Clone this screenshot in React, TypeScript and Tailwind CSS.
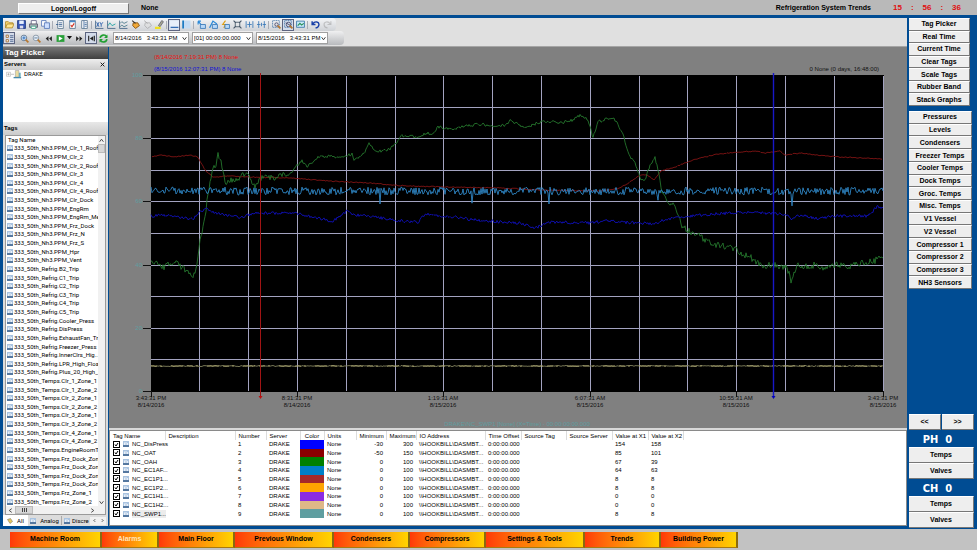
import type { ReactNode } from "react";

const UI = "font-['Liberation_Sans',Arial,sans-serif]";
const LIST = "font-[Roboto,'Liberation_Sans',sans-serif]";

type Point = [number, number];

const SERVER = "DRAKE";

const tagNames = [
  "333_50th_Nh3.PPM_Clr_1_Roof",
  "333_50th_Nh3.PPM_Clr_2",
  "333_50th_Nh3.PPM_Clr_2_Roof",
  "333_50th_Nh3.PPM_Clr_3",
  "333_50th_Nh3.PPM_Clr_4",
  "333_50th_Nh3.PPM_Clr_4_Roof",
  "333_50th_Nh3.PPM_Clr_Dock",
  "333_50th_Nh3.PPM_EngRm",
  "333_50th_Nh3.PPM_EngRm_Me",
  "333_50th_Nh3.PPM_Frz_Dock",
  "333_50th_Nh3.PPM_Frz_N",
  "333_50th_Nh3.PPM_Frz_S",
  "333_50th_Nh3.PPM_Hpr",
  "333_50th_Nh3.PPM_Vent",
  "333_50th_Refrig.B2_Trip",
  "333_50th_Refrig.C1_Trip",
  "333_50th_Refrig.C2_Trip",
  "333_50th_Refrig.C3_Trip",
  "333_50th_Refrig.C4_Trip",
  "333_50th_Refrig.C5_Trip",
  "333_50th_Refrig.Cooler_Press",
  "333_50th_Refrig.DisPress",
  "333_50th_Refrig.ExhaustFan_Tr",
  "333_50th_Refrig.Freezer_Press",
  "333_50th_Refrig.InnerClrs_Hig..",
  "333_50th_Refrig.LPR_High_Floa",
  "333_50th_Refrig.Plus_20_High_.",
  "333_50th_Temps.Clr_1_Zone_1",
  "333_50th_Temps.Clr_1_Zone_2",
  "333_50th_Temps.Clr_2_Zone_1",
  "333_50th_Temps.Clr_2_Zone_2",
  "333_50th_Temps.Clr_3_Zone_1",
  "333_50th_Temps.Clr_3_Zone_2",
  "333_50th_Temps.Clr_4_Zone_1",
  "333_50th_Temps.Clr_4_Zone_2",
  "333_50th_Temps.EngineRoomT.",
  "333_50th_Temps.Frz_Dock_Zon.",
  "333_50th_Temps.Frz_Dock_Zon.",
  "333_50th_Temps.Frz_Dock_Zon.",
  "333_50th_Temps.Frz_Dock_Zon.",
  "333_50th_Temps.Frz_Zone_1",
  "333_50th_Temps.Frz_Zone_2",
];

const pens = [
  { name: "NC_DisPress", color: "bg-[#0000ff]", min: -30, max: 300, x1: 154, x2: 158 },
  { name: "NC_OAT", color: "bg-[#8b0000]", min: -50, max: 150, x1: 85, x2: 101 },
  { name: "NC_OAH", color: "bg-[#008000]", min: 0, max: 100, x1: 67, x2: 39 },
  { name: "NC_EC1AF...", color: "bg-[#0080c8]", min: 0, max: 100, x1: 64, x2: 63 },
  { name: "NC_EC1P1...", color: "bg-[#a52a2a]", min: 0, max: 100, x1: 8, x2: 8 },
  { name: "NC_EC1P2...", color: "bg-[#ffa500]", min: 0, max: 100, x1: 8, x2: 8 },
  { name: "NC_EC1H1...", color: "bg-[#8a2be2]", min: 0, max: 100, x1: 0, x2: 0 },
  { name: "NC_EC1H2...", color: "bg-[#deb887]", min: 0, max: 100, x1: 0, x2: 0 },
  { name: "NC_SWP1...", color: "bg-[#5f9ea0]", min: 0, max: 100, x1: 8, x2: 8 },
];

const penColumns = [
  { label: "Tag Name", width: "w-[55px]", align: "text-left" },
  { label: "Description", width: "w-[70px]", align: "text-left" },
  { label: "Number", width: "w-[31px]", align: "text-left" },
  { label: "Server", width: "w-[34px]", align: "text-left" },
  { label: "Color", width: "w-[24px]", align: "text-center" },
  { label: "Units", width: "w-[32px]", align: "text-left" },
  { label: "Minimum", width: "w-[30px]", align: "text-right" },
  { label: "Maximum", width: "w-[30px]", align: "text-right" },
  { label: "IO Address", width: "w-[69px]", align: "text-left" },
  { label: "Time Offset", width: "w-[36px]", align: "text-right" },
  { label: "Source Tag", width: "w-[45px]", align: "text-left" },
  { label: "Source Server", width: "w-[46px]", align: "text-left" },
  { label: "Value at X1", width: "w-[36px]", align: "text-left" },
  { label: "Value at X2", width: "w-[35px]", align: "text-left" },
];

const viewButtons = ["Tag Picker", "Real Time", "Current Time", "Clear Tags", "Scale Tags", "Rubber Band", "Stack Graphs"];

const groupButtons = [
  "Pressures",
  "Levels",
  "Condensers",
  "Freezer Temps",
  "Cooler Temps",
  "Dock Temps",
  "Groc. Temps",
  "Misc. Temps",
  "V1 Vessel",
  "V2 Vessel",
  "Compressor 1",
  "Compressor 2",
  "Compressor 3",
  "NH3 Sensors",
];

const navButtons = [
  { label: "Machine Room", width: "w-[92px]" },
  { label: "Alarms", width: "w-[57px]", active: true },
  { label: "Main Floor", width: "w-[76px]" },
  { label: "Previous Window", width: "w-[99px]" },
  { label: "Condensers", width: "w-[76px]" },
  { label: "Compressors", width: "w-[76px]" },
  { label: "Settings & Tools", width: "w-[99px]" },
  { label: "Trends", width: "w-[76px]" },
  { label: "Building Power", width: "w-[77px]" },
];

/* ---------- Trend data ---------- */

const humidity: Point[] = [
  [151, 264], [160, 264], [164, 268], [167, 264], [176, 263], [184, 269], [188, 271], [193, 277], [197, 264],
  [199, 250], [201, 235], [205, 218], [208, 193], [213, 166], [216, 167], [218, 155], [221, 160], [225, 184],
  [232, 180], [240, 177], [247, 173], [255, 188], [260, 178], [268, 175], [274, 180], [284, 172], [288, 176],
  [297, 165], [302, 161], [307, 166], [318, 157], [345, 156], [352, 154], [354, 159], [362, 156], [369, 144],
  [376, 152], [390, 149], [402, 136], [410, 136], [415, 137], [427, 133], [432, 135], [438, 127], [452, 130],
  [465, 126], [480, 124], [495, 126], [505, 125], [510, 121], [527, 128], [537, 123], [550, 121], [560, 123],
  [572, 120], [580, 115], [588, 120], [593, 137], [598, 122], [608, 118], [614, 118], [622, 132], [630, 157],
  [634, 160], [641, 180], [645, 180], [649, 168], [655, 158], [658, 170], [662, 192], [670, 206], [673, 202],
  [682, 225], [687, 230], [697, 235], [712, 243], [737, 250], [755, 260], [763, 269], [770, 265], [787, 267],
  [791, 280], [797, 265], [810, 266], [818, 264], [820, 271], [826, 266], [843, 264], [847, 271], [853, 265],
  [870, 262], [883, 258],
];

const outsideTemp: Point[] = [
  [152, 157], [160, 155], [175, 157], [190, 155], [198, 157], [205, 170], [213, 177], [230, 176], [250, 177],
  [290, 178], [330, 181], [370, 183], [405, 186], [450, 187], [500, 188], [540, 190], [600, 191], [620, 188],
  [630, 182], [640, 175], [647, 175], [654, 180], [661, 171], [675, 167], [690, 161], [700, 158], [718, 154],
  [740, 152], [756, 151], [765, 153], [780, 151], [785, 155], [800, 153], [815, 155], [840, 157], [882, 159],
];

const pressure: Point[] = [
  [151, 216], [165, 215], [185, 218], [193, 219], [200, 212], [206, 209], [212, 212], [220, 214], [240, 217],
  [255, 213], [295, 213], [310, 217], [333, 221], [347, 211], [355, 215], [375, 217], [400, 221], [418, 222],
  [425, 214], [435, 216], [455, 217], [475, 220], [500, 222], [520, 223], [535, 228], [550, 222], [590, 223],
  [603, 221], [655, 224], [665, 219], [700, 215], [745, 212], [785, 214], [792, 219], [800, 215], [820, 219],
  [830, 216], [868, 216], [877, 207], [883, 208],
];

const airflow: Point[] = [
  [151, 191], [379, 191], [380, 202], [381, 191], [471, 191], [472, 204], [473, 191], [548, 191], [549, 201],
  [550, 191], [657, 191], [658, 203], [659, 191], [791, 191], [792, 205], [793, 191], [883, 191],
];

const suction: Point[] = [[151, 366], [883, 366]];

function trace(points: Point[], noise: (x: number) => number, seed: number) {
  let state = seed;
  const rand = () => {
    state = (state * 16807) % 2147483647;
    return state / 2147483647 - 0.5;
  };
  const out: string[] = [];
  for (let i = 0; i < points.length - 1; i++) {
    const [x0, y0] = points[i];
    const [x1, y1] = points[i + 1];
    for (let x = x0; x < x1; x++) {
      const y = y0 + ((y1 - y0) * (x - x0)) / (x1 - x0);
      out.push(`${x},${(y + rand() * noise(x)).toFixed(1)}`);
    }
  }
  const [lx, ly] = points[points.length - 1];
  out.push(`${lx},${ly}`);
  return out.join(" ");
}

const traces = [
  { color: "#801414", points: trace(outsideTemp, () => 1, 11) },
  { color: "#25752c", points: trace(humidity, (x) => (x > 680 ? 7 : x > 290 ? 3 : 6), 23) },
  { color: "#1010b8", points: trace(pressure, () => 3, 37) },
  { color: "#2f86c4", points: trace(airflow, () => 8, 51) },
  { color: "#85855f", points: trace(suction, () => 1, 73) },
];

const timeLabels = [
  { x: 151, time: "3:43:31 PM", date: "8/14/2016" },
  { x: 297, time: "8:31:31 PM", date: "8/14/2016" },
  { x: 443, time: "1:19:31 AM", date: "8/15/2016" },
  { x: 590, time: "6:07:31 AM", date: "8/15/2016" },
  { x: 736, time: "10:55:31 AM", date: "8/15/2016" },
  { x: 883, time: "3:43:31 PM", date: "8/15/2016" },
];

const gridX = Array.from({ length: 14 }, (_, i) => Math.floor(151 + (i + 1) * 48.8));
const gridY = Array.from({ length: 9 }, (_, i) => Math.round(75 + (i + 1) * 31.6));

function TrendChart() {
  return (
    <svg viewBox="109 47 798 381" className="block w-full" role="img" aria-label="Trend">
      <rect x="109" y="47" width="798" height="381" fill="#808080" />
      <rect x="151" y="75" width="733" height="317" fill="#000" />
      <g stroke="#a3a3c0" shapeRendering="crispEdges">
        {gridX.map((x) => (
          <path key={x} d={`M${x}.5 76V391`} />
        ))}
        {gridY.map((y) => (
          <path key={y} d={`M151 ${y}.5H884`} />
        ))}
        <path d="M883.5 76V391" />
      </g>
      <g stroke="#111" shapeRendering="crispEdges">
        {[75, 138, 201, 265, 328, 391].map((y) => (
          <path key={y} d={`M143 ${y}.5H151`} />
        ))}
        {timeLabels.map((t) => (
          <path key={t.x} d={`M${t.x}.5 391V397`} />
        ))}
      </g>
      {traces.map((t) => (
        <polyline key={t.color} points={t.points} fill="none" stroke={t.color} strokeWidth="0.9" />
      ))}
      <path d="M151 366H883" stroke="#e0d890" strokeWidth="0.6" strokeDasharray="6 3 2 9 12 4" />
      <path d="M260.5 73V396" stroke="#a01414" />
      <path d="M258.5 396h4l-2 3z" fill="#c01010" />
      <path d="M773.5 73V396" stroke="#1818c8" strokeWidth="1.4" />
      <path d="M771.5 396h4l-2 3z" fill="#0000c0" />
      <g fontSize="6">
        <text x="154" y="59" fill="#f01010">(8/14/2016 7:19:31 PM) 8 None</text>
        <text x="154" y="71" fill="#1010d8">(8/15/2016 12:07:31 PM) 8 None</text>
        <text x="879" y="71" textAnchor="end" fill="#111">0 None (0 days, 16:48:00)</text>
        <g fill="#5f9ea0" textAnchor="end">
          {[100, 80, 60, 40, 20, 0].map((v, i) => (
            <text key={v} x="142" y={77 + Math.round(i * 63.2)}>{v}</text>
          ))}
        </g>
        <g fill="#111" textAnchor="middle">
          {timeLabels.map((t) => (
            <g key={t.x}>
              <text x={t.x} y="400">{t.time}</text>
              <text x={t.x} y="407">{t.date}</text>
            </g>
          ))}
        </g>
        <text x="517" y="426" textAnchor="middle" fill="#5f9ea0">DRAKE\NC_SWP1 [None] (X=Time) - 00:00:00:00.000</text>
      </g>
    </svg>
  );
}

/* ---------- Toolbar ---------- */

function Icon({ children, dim }: { children: ReactNode; dim?: boolean }) {
  return (
    <svg viewBox="0 0 16 16" className={dim ? "size-[9px] opacity-40" : "size-[9px]"} fill="none" strokeWidth="1.5">
      {children}
    </svg>
  );
}

const sheet = <path d="M3 1h10v14H3z" fill="#fff" stroke="#5a7590" />;
const plot = <path d="M1 1v14h14" stroke="#446688" />;
const lens = <path d="M10 10l5 5" stroke="#b87830" strokeWidth="3" />;

const fileIcons: [string, ReactNode][] = [
  ["Open", <><path d="M1 14V3h5l2 2h6v3" fill="#f8d878" stroke="#b08828" /><path d="M1 14l3-7h12l-3 7z" fill="#ffe690" stroke="#b08828" /></>],
  ["Save", <><path d="M1 1h14v14H1z" fill="#3858b8" stroke="#203880" /><path d="M4 1h8v6H4z" fill="#e8f0ff" /><path d="M5 10h6v5H5z" fill="#dde" /></>],
  ["Print", <><path d="M4 7V1h9v6" fill="#fff" stroke="#668" /><path d="M1 7h14v6H1z" fill="#a8b0b8" stroke="#556" /><path d="M4 11h8v4H4z" fill="#fff" stroke="#4a8" /></>],
  ["Copy", <><path d="M1 1h8v10H1z" fill="#fff" stroke="#5878b8" /><path d="M6 5h9v10H6z" fill="#cfe0ff" stroke="#5878b8" /></>],
];

const docIcons: [string, ReactNode][] = [
  ["Export", <>{sheet}<path d="M5 5h6M5 8h6M5 11h6M0 8h4" stroke="#3a6090" /></>],
  ["Configure", <>{sheet}<path d="M3 1h10v3H3z" fill="#4888c8" /><path d="M5 9l2 3 4-6" stroke="#d03020" strokeWidth="2" /></>],
  ["Report", <>{sheet}<path d="M7 1v14M8 5h4M8 8h4M8 11h4" stroke="#4870a0" /></>],
];

const chartIcons: [string, ReactNode][] = [
  ["XY Plot", <>{plot}<path d="M3 4l4 8M7 4l-4 8M9 4l2 4 3-4M11 8v4" stroke="#2058a8" /></>],
  ["Trend Plot", <>{plot}<path d="M2 10l3-5 4 5 6-3" stroke="#18a0a0" /></>],
  ["Stacked Plot", <>{plot}<path d="M2 6l3-3 4 3 6-3M2 12l3-3 4 3 6-3" stroke="#48788a" /></>],
  ["Add Tag", <><path d="M4 5h8l3 5-7 5-5-5z" fill="#f0a838" stroke="#805010" /><path d="M2 1l6 5" stroke="#333" strokeWidth="2" /></>],
  ["Remove Tag", <g opacity=".45"><path d="M4 5h8l3 5-7 5-5-5z" fill="#ddd" stroke="#777" /><path d="M2 1l6 5" stroke="#555" /></g>],
  ["Highlight", <><path d="M6 10l6-9 3 2-6 9z" fill="#a8a890" stroke="#667" /><path d="M0 12h10v4H0z" fill="#f0e020" /></>],
];

const cursorIcons: [string, ReactNode][] = [
  ["Pan X", <><path d="M2 2l6 7M2 2v6M2 2h5" stroke="#2888d8" strokeWidth="2" /><path d="M6 8h9v7H6z" fill="#b8d8f8" stroke="#3878b8" /></>],
  ["Pan Y", <><path d="M1 14l6-12 7 5" stroke="#2888d8" strokeWidth="2" /><path d="M6 8h9v7H6z" fill="#b8d8f8" stroke="#3878b8" /></>],
  ["Auto Scale", <><path d="M8 1l-5 7h5l-3 6" stroke="#e0a010" strokeWidth="2" /><path d="M7 8h8v7H7z" fill="#b8d8f8" stroke="#3878b8" /></>],
  ["Zoom Extents", <><path d="M4 4h8v8H4z" stroke="#456" /><path d="M1 1l4 4M15 1l-4 4M1 15l4-4M15 15l-4-4" stroke="#456" strokeWidth="2" /></>],
  ["Fit Width", <><path d="M2 2v12M14 2v12M4 8h8M8 3v10" stroke="#3878b8" /></>],
  ["Center", <><path d="M3 2v12M13 2v12M0 8h6M10 8h6M8 5v6" stroke="#3878b8" /></>],
];

const zoomIcons: [string, ReactNode, boolean][] = [
  ["Zoom Box", <><path d="M1 1h12v12H1z" stroke="#4878a8" strokeDasharray="2 1" /><circle cx="8" cy="8" r="3" stroke="#446" />{lens}</>, false],
  ["Zoom Trace", <><path d="M1 1h12v12H1z" stroke="#4878a8" strokeDasharray="2 1" /><path d="M3 5l9 5" stroke="#446" /><circle cx="8" cy="8" r="4" stroke="#446" />{lens}</>, true],
  ["Snapshot", <><path d="M1 2h14v11H1z" fill="#c8e8f8" stroke="#3878a8" /><path d="M3 10l4-4 3 3 4-3" stroke="#289058" strokeWidth="2" /></>, false],
];

function ToolButton({ label, children, selected, dim }: { label: string; children: ReactNode; selected?: boolean; dim?: boolean }) {
  return (
    <button
      aria-label={label}
      className={
        selected
          ? "flex size-3 shrink-0 items-center justify-center border border-[#5c6480] bg-[#d3dbea]"
          : "flex size-3 shrink-0 items-center justify-center"
      }
    >
      <Icon dim={dim}>{children}</Icon>
    </button>
  );
}

function Separator() {
  return <span className="mx-px h-2 w-px shrink-0 bg-[#a9adb5]" />;
}

function ToolSelect({ label, value, width }: { label: string; value: string; width: string }) {
  return (
    <span className={`relative flex h-3 items-center border border-[#a0a0a0] bg-white ${width}`}>
      <select aria-label={label} className="w-full appearance-none bg-transparent pl-px text-[6px] leading-[10px] text-black">
        <option>{value}</option>
      </select>
      <svg viewBox="0 0 8 8" className="pointer-events-none absolute right-px size-[5px]" fill="none" stroke="#333" strokeWidth="1.5">
        <path d="M1 2l3 4 3-4" />
      </svg>
    </span>
  );
}

function Toolbars() {
  return (
    <div className="border-b border-[#a5a5a5] bg-[#e0e0e0] pb-px">
      <div className="flex h-[13px] w-[333px] items-center rounded-r-sm bg-gradient-to-b from-[#f4f5f7] to-[#cfd2d6]">
        {fileIcons.map(([label, icon]) => <ToolButton key={label} label={label}>{icon}</ToolButton>)}
        <Separator />
        {docIcons.map(([label, icon]) => <ToolButton key={label} label={label}>{icon}</ToolButton>)}
        <Separator />
        {chartIcons.map(([label, icon]) => <ToolButton key={label} label={label}>{icon}</ToolButton>)}
        <Separator />
        <ToolButton label="Show Pen Table" selected>
          <path d="M0 1h16v14H0z" fill="#e6eefa" /><path d="M1 13h14" stroke="#1858a8" strokeWidth="2" />
        </ToolButton>
        <ToolButton label="Show Tag Picker">
          <path d="M1 1h14v14H1z" fill="#c4dcf4" /><path d="M2 1v14" stroke="#1878c0" strokeWidth="3" />
        </ToolButton>
        <Separator />
        {cursorIcons.map(([label, icon]) => <ToolButton key={label} label={label}>{icon}</ToolButton>)}
        <Separator />
        {zoomIcons.map(([label, icon, on]) => <ToolButton key={label} label={label} selected={on}>{icon}</ToolButton>)}
        <Separator />
        <ToolButton label="Undo"><path d="M3 7c4-6 12-4 11 2-1 4-4 5-6 5M2 2v6h6" stroke="#1840a8" strokeWidth="2.5" /></ToolButton>
        <ToolButton label="Redo" dim><path d="M13 7C9 1 1 3 2 9c1 4 4 5 6 5M14 2v6H8" stroke="#888" strokeWidth="2" /></ToolButton>
      </div>
      <div className="flex h-3.5 w-[341px] items-center rounded-r-sm bg-gradient-to-b from-[#f0f0f1] to-[#b8babd]">
        <ToolButton label="Tag Tree" selected>
          <path d="M2 2h4v4H2zM2 10h4v4H2z" fill="#fff" stroke="#a06828" /><path d="M9 3h6M9 6h6M9 10h6M9 13h6" stroke="#48608a" />
        </ToolButton>
        <span className="w-[3px]" />
        <ToolButton label="Zoom In"><circle cx="7" cy="7" r="5" fill="#d8ecff" stroke="#58708a" /><path d="M4 7h6M7 4v6" stroke="#2060b0" />{lens}</ToolButton>
        <ToolButton label="Zoom Out"><circle cx="7" cy="7" r="5" fill="#e8f0f8" stroke="#8090a0" /><path d="M4 7h6" stroke="#507090" />{lens}</ToolButton>
        <ToolButton label="Rewind"><path d="M8 4v9L3 8zM14 4v9L9 8z" fill="#222" /></ToolButton>
        <ToolButton label="Play"><path d="M1 2h14v12H1z" fill="#28a038" /><path d="M5 4v8l7-4z" fill="#fff" /></ToolButton>
        <button aria-label="Play Options" className="flex w-1.5 justify-center">
          <svg viewBox="0 0 8 5" className="w-[5px]" fill="#111"><path d="M0 0h8L4 5z" /></svg>
        </button>
        <span className="w-px" />
        <ToolButton label="Fast Forward"><path d="M2 4v9l5-5zM8 4v9l5-5z" fill="#222" /></ToolButton>
        <ToolButton label="Go To End" selected><path d="M3 3v10M13 3v10" stroke="#222" strokeWidth="2" /><path d="M11 4v8L5 8z" fill="#222" /></ToolButton>
        <ToolButton label="Refresh">
          <path d="M2 7c1-6 9-7 12-2M14 9c-1 6-9 7-12 2" stroke="#20a030" strokeWidth="3" /><path d="M15 1v6H9zM1 15V9h6z" fill="#20a030" />
        </ToolButton>
        <span className="ml-1 flex gap-[3px]">
          <ToolSelect label="Start time" value={"8/14/2016\u00a0\u00a0\u00a03:43:31 PM"} width="w-[76px]" />
          <ToolSelect label="Span" value="[01] 00:00:00.000" width="w-[61px]" />
          <ToolSelect label="End time" value={"8/15/2016\u00a0\u00a0\u00a03:43:31 PM"} width="w-[72px]" />
        </span>
      </div>
    </div>
  );
}

/* ---------- Tag picker ---------- */

function TagIcon() {
  return (
    <svg viewBox="0 0 12 12" className="size-1.5 shrink-0">
      <path d="M0 0h12v12H0z" fill="#a9c3e0" />
      <path d="M0 8h12v4H0z" fill="#54779f" />
      <path d="M3 3v5M6 2v6M9 4v4" stroke="#fff" strokeWidth="1.5" />
    </svg>
  );
}

function Chevron({ d }: { d: string }) {
  return (
    <svg viewBox="0 0 8 8" className="size-[5px]" fill="none" stroke="#444" strokeWidth="1.5">
      <path d={d} />
    </svg>
  );
}

function TagPicker() {
  return (
    <aside className="flex w-[105px] shrink-0 flex-col bg-[#dcdcdc]">
      <h2 className="h-3 bg-gradient-to-b from-[#777] to-[#3f3f3f] pl-0.5 text-[8px] leading-3 font-bold text-white">Tag Picker</h2>
      <div className="flex h-[11px] items-center justify-between bg-gradient-to-b from-[#eee] to-[#ccc] px-px text-[6px] font-bold">
        <span>Servers</span>
        <button aria-label="Close" className="pr-0.5">
          <svg viewBox="0 0 8 8" className="size-[5px]" stroke="#111" strokeWidth="1.5"><path d="M1 1l6 6M7 1l-6 6" /></svg>
        </button>
      </div>
      <div className={`flex h-[52px] items-start gap-0.5 bg-white pl-[3px] text-[6px] leading-[8px] ${LIST}`}>
        <svg viewBox="0 0 36 20" className="h-[9px] w-4">
          <path d="M1 5h9v9H1z" fill="#fff" stroke="#999" />
          <path d="M3 9.5h5M5.5 7v5M11 9.5h7" stroke="#777" />
          <path d="M21 1h8v15h-8z" fill="#e8dca0" stroke="#889" />
          <path d="M17 17h17" stroke="#48a" strokeWidth="3" />
          <path d="M29 6h4v10h-4z" fill="#6ab0c0" />
        </svg>
        <span>{SERVER}</span>
      </div>
      <h3 className="h-[13px] bg-gradient-to-b from-[#e8e8e8] to-[#cbcbcb] pl-px text-[6px] leading-[12px] font-bold">Tags</h3>
      <div className="mx-0.5 flex flex-1 flex-col border border-[#9a9a9a] bg-white">
        <div className="flex flex-1">
          <div className={`flex w-[92px] flex-col pl-px text-[6px] leading-[8px] ${LIST}`}>
            <div className="h-2 pl-px">Tag Name</div>
            <ul className="grid flex-1 auto-rows-fr">
              {tagNames.map((name, i) => (
                <li key={i} className="flex items-center gap-px whitespace-nowrap">
                  <TagIcon />
                  {name}
                </li>
              ))}
            </ul>
          </div>
          <div className="flex flex-1 flex-col items-center justify-between bg-[#f1f1f1]">
            <div className="flex w-full flex-col items-center">
              <button aria-label="Scroll up" className="flex h-2 items-center"><Chevron d="M1 6l3-4 3 4" /></button>
              <span className="h-[9px] w-full border border-[#bbb] bg-[#d6d6d6]" />
            </div>
            <button aria-label="Scroll down" className="flex h-2 items-center"><Chevron d="M1 2l3 4 3-4" /></button>
          </div>
        </div>
        <div className="flex h-2 items-center bg-[#f1f1f1] pr-[10px] pl-0.5">
          <button aria-label="Scroll left"><Chevron d="M6 1L2 4l4 3" /></button>
          <span className="ml-0.5 flex h-2 w-[18px] items-center justify-center gap-px border border-[#bbb] bg-[#d6d6d6]">
            <i className="h-1 w-px bg-[#444]" />
            <i className="h-1 w-px bg-[#444]" />
            <i className="h-1 w-px bg-[#444]" />
          </span>
          <button aria-label="Scroll right" className="ml-auto"><Chevron d="M2 1l4 3-4 3" /></button>
        </div>
      </div>
      <div className={`flex h-[11px] items-center text-[6px] ${LIST}`}>
        <button className="flex h-full w-[25px] items-center justify-center gap-1 bg-white">
          <svg viewBox="0 0 12 12" className="size-1.5"><path d="M1 3l6-2 4 6-5 4z" fill="#e8c860" stroke="#665" /></svg>
          All
        </button>
        <button className="flex w-[34px] items-center justify-center gap-1 border-r border-[#aaa]"><TagIcon />Analog</button>
        <button className="flex w-[28px] items-center gap-0.5 pl-0.5"><TagIcon />Discre</button>
        <button aria-label="Previous tab" className="flex h-2 w-2 items-center justify-center bg-[#f1f1f1]"><Chevron d="M5 2L3 4l2 2" /></button>
        <button aria-label="Next tab" className="flex h-2 w-2 items-center justify-center bg-[#f1f1f1]"><Chevron d="M3 2l2 2-2 2" /></button>
      </div>
    </aside>
  );
}

/* ---------- Pen table ---------- */

function PenTable() {
  return (
    <div className="flex-1 border border-[#8a8a8a] bg-white text-[6px] leading-[8px]">
      <table className="h-[87px] w-full table-fixed border-collapse [&_td]:px-[3px] [&_td]:whitespace-nowrap">
        <thead>
          <tr className="h-[9px]">
            {penColumns.map((c) => (
              <th key={c.label} className={`border-r border-[#dcdcdc] px-[3px] font-normal whitespace-nowrap ${c.width} ${c.align}`}>
                {c.label}
              </th>
            ))}
            <td />
          </tr>
        </thead>
        <tbody>
          {pens.map((pen, i) => (
            <tr key={pen.name}>
              <td>
                <label className="flex items-center gap-[3px]">
                  <span className="relative flex size-[7px] shrink-0">
                    <input type="checkbox" defaultChecked className="size-[7px] appearance-none border border-black bg-white" />
                    <svg viewBox="0 0 7 7" className="pointer-events-none absolute inset-0" fill="none" stroke="#000">
                      <path d="M2 3.5l1 1.5 2-3" />
                    </svg>
                  </span>
                  <TagIcon />
                  <span className={i === pens.length - 1 ? "bg-[#ececec]" : ""}>{pen.name}</span>
                </label>
              </td>
              <td />
              <td>{i + 1}</td>
              <td>{SERVER}</td>
              <td className={pen.color} />
              <td>None</td>
              <td className="text-right">{pen.min}</td>
              <td className="text-right">{pen.max}</td>
              <td>\\HOOKBILL\DASMBT...</td>
              <td className="text-right">0:00:00.000</td>
              <td />
              <td />
              <td>{pen.x1}</td>
              <td>{pen.x2}</td>
              <td />
            </tr>
          ))}
        </tbody>
      </table>
    </div>
  );
}

/* ---------- Side rail ---------- */

function RailButton({ children }: { children: ReactNode }) {
  return (
    <button className="flex w-full flex-1 items-center justify-center border-t border-r border-b border-t-white border-r-[#777] border-b-[#777] bg-[#eee] text-[7px] leading-[8px] font-bold whitespace-nowrap">
      {children}
    </button>
  );
}

function RailGroup({ title }: { title: string }) {
  return (
    <section>
      <h2 className="h-[17px] pr-2 text-center font-['DejaVu_Sans_Condensed','DejaVu_Sans',sans-serif] text-[11px] leading-[19px] font-bold whitespace-pre text-white">
        {title}
      </h2>
      <div className="flex h-8 flex-col">
        <RailButton>Temps</RailButton>
        <RailButton>Valves</RailButton>
      </div>
    </section>
  );
}

function SideRail() {
  return (
    <nav className="flex w-[70px] shrink-0 flex-col pr-[3px] pl-0.5">
      <div className="mr-1 flex h-[88px] flex-col">
        {viewButtons.map((b) => <RailButton key={b}>{b}</RailButton>)}
      </div>
      <div className="mt-[5px] mr-0.5 flex h-[178px] flex-col">
        {groupButtons.map((b) => <RailButton key={b}>{b}</RailButton>)}
      </div>
      <div className="mt-auto flex flex-col">
        <div className="flex h-4 gap-px">
          <RailButton>&lt;&lt;</RailButton>
          <RailButton>&gt;&gt;</RailButton>
        </div>
        <RailGroup title="PH  0" />
        <RailGroup title="CH  0" />
      </div>
    </nav>
  );
}

export default function App() {
  return (
    <div className={`flex min-h-screen flex-col bg-[#004c93] text-black ${UI}`}>
      {/* Status bar */}
      <header className="flex h-[15px] items-center bg-[#b9b9b9] pt-px pr-4 pl-[18px] text-[7px] font-bold">
        <button className="h-[11px] w-[111px] border border-[#777] border-t-white border-l-white bg-[#eee] leading-[9px]">Logon/Logoff</button>
        <span className="ml-3">None</span>
        <h1 className="mr-[22px] ml-auto">Refrigeration System Trends</h1>
        <div className="flex w-[68px] justify-between text-[8px] text-[#e01010]">
          <span>15</span>
          <span>:</span>
          <span>56</span>
          <span>:</span>
          <span>36</span>
        </div>
      </header>

      <div className="flex flex-1 pt-[3px]">
        {/* Trend window */}
        <main className="ml-[3px] flex min-w-0 flex-1 flex-col">
          <Toolbars />
          <div className="flex flex-1">
            <TagPicker />
            <div className="ml-px flex min-w-0 flex-1 flex-col">
              <TrendChart />
              <div className="h-0.5 bg-[#d8d8d8]" />
              <PenTable />
            </div>
          </div>
          <div className="h-0.5" />
        </main>
        <SideRail />
      </div>

      {/* Navigation */}
      <footer className="mt-px flex h-[21px] items-center bg-[#c2c2c2] pl-[10px]">
        {navButtons.map((b) => (
          <button
            key={b.label}
            className={`h-4 border-r-2 border-b border-r-[#8a6a10] border-b-[#a87a10] bg-gradient-to-r from-[#ff3808] via-[#ff8a08] to-[#ffd400] text-[7px] font-bold whitespace-nowrap ${b.width} ${b.active ? "text-[#ffe4bc]" : "text-black"}`}
          >
            {b.label}
          </button>
        ))}
      </footer>
    </div>
  );
}
